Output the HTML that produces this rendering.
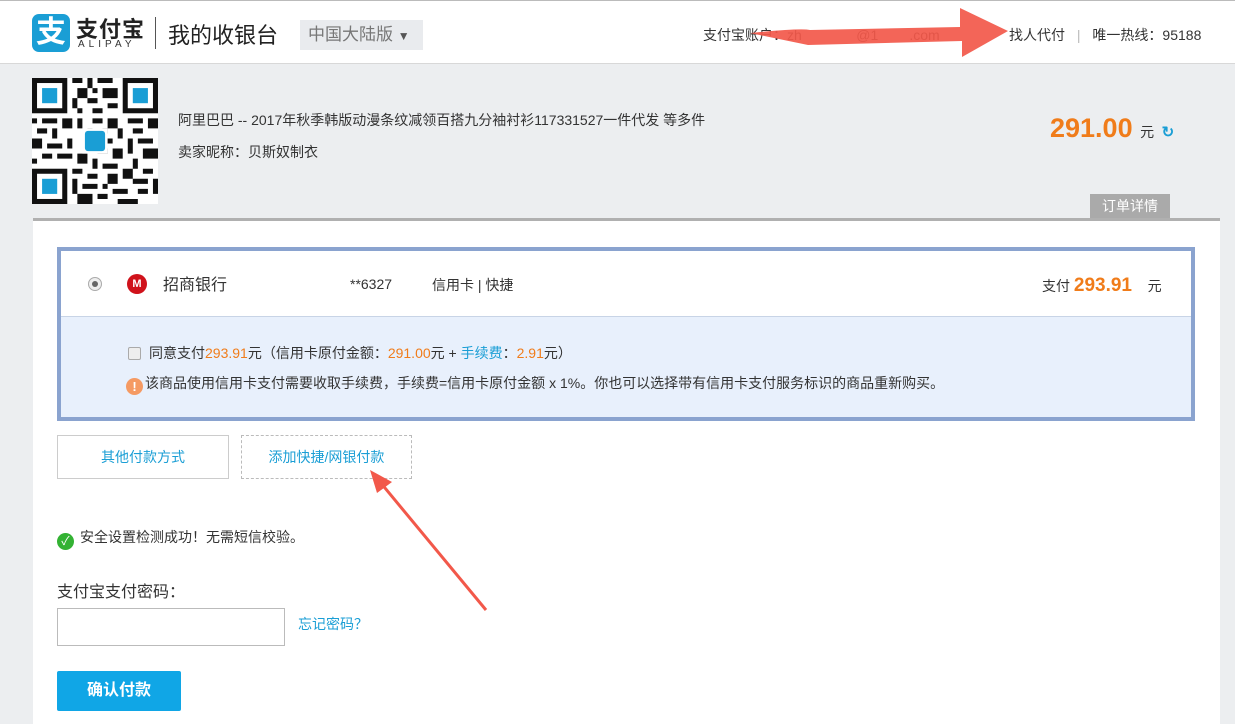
<!DOCTYPE html>
<html><head><meta charset="utf-8"><style>
*{margin:0;padding:0;box-sizing:border-box}
body{width:1235px;height:724px;overflow:hidden;background:#eceef0;font-family:"Liberation Sans","Noto Sans CJK SC",sans-serif;color:#333;position:relative;font-size:14px}
.abs{position:absolute}
#hdr{left:0;top:0;width:1235px;height:64px;background:#fff;border-top:1px solid #bbb;border-bottom:1px solid #d8d8d8}
#panel{left:33px;top:218px;width:1187px;height:506px;background:#fff;border-top:3px solid #b0b0b0}
.or{color:#f07c1a}
.bl{color:#1a9ed5}
</style></head><body>
<div id="hdr" class="abs">
  <div class="abs" style="left:32px;top:13px;width:38px;height:38px;background:#1a9ed5;border-radius:7px;color:#fff;font-size:30px;line-height:38px;text-align:center;font-weight:bold">支</div>
  <div class="abs" style="left:76px;top:11px;font-size:22px;font-weight:bold;color:#222;letter-spacing:1px">支付宝</div>
  <div class="abs" style="left:78px;top:38px;font-size:10px;letter-spacing:4px;color:#333">ALIPAY</div>
  <div class="abs" style="left:155px;top:16px;width:1px;height:32px;background:#555"></div>
  <div class="abs" style="left:168px;top:17px;font-size:22px;color:#222">我的收银台</div>
  <div class="abs" style="left:300px;top:19px;width:123px;height:30px;background:#e9ebee;color:#777;font-size:17px;line-height:30px;padding-left:8px">中国大陆版 <span style="font-size:12px;color:#555">▼</span></div>
  <div class="abs" style="left:703px;top:24px;font-size:14px;color:#333">支付宝账户：zh&nbsp;&nbsp;&nbsp;&nbsp;&nbsp;&nbsp;&nbsp;&nbsp;&nbsp;&nbsp;&nbsp;&nbsp;&nbsp;&nbsp;@1&nbsp;&nbsp;&nbsp;&nbsp;&nbsp;&nbsp;&nbsp;&nbsp;.com</div>
  <div class="abs" style="left:1009px;top:24px;font-size:14px;color:#333">找人代付 <span style="color:#bbb;margin:0 8px">|</span> 唯一热线：95188</div>
</div>
<!-- QR -->
<svg class="abs" style="left:32px;top:78px" width="126" height="126" viewBox="0 0 25 25">
<rect width="25" height="25" fill="#fff"/>
<g fill="#111">
<rect x="0" y="0" width="7" height="7"/><rect x="18" y="0" width="7" height="7"/><rect x="0" y="18" width="7" height="7"/>
<path d="M8 0h2v1h-2zM11 0h1v2h-1zM13 0h3v1h-3zM9 2h2v2h-2zM12 2h1v1h-1zM14 2h3v2h-3zM8 4h1v2h-1zM11 4h2v1h-2zM15 5h2v1h-2zM9 6h1v1h-1zM12 6h2v1h-2zM0 8h1v1h-1zM2 8h3v1h-3zM6 8h2v2h-2zM9 8h1v2h-1zM12 8h2v1h-2zM15 8h2v2h-2zM19 8h3v1h-3zM23 8h2v2h-2zM1 10h2v1h-2zM4 10h1v2h-1zM11 10h1v1h-1zM14 10h1v1h-1zM17 10h1v2h-1zM20 10h2v1h-2zM0 12h2v2h-2zM3 13h3v1h-3zM7 12h1v2h-1zM14 12h2v1h-2zM19 12h1v3h-1zM21 12h3v1h-3zM2 15h2v1h-2zM5 15h3v1h-3zM9 15h2v2h-2zM13 14h2v1h-2zM16 14h2v2h-2zM22 14h3v2h-3zM0 16h1v1h-1zM12 16h1v2h-1zM14 17h3v1h-3zM20 16h1v2h-1zM8 18h2v1h-2zM11 19h2v1h-2zM18 18h2v2h-2zM22 18h2v1h-2zM8 20h1v3h-1zM10 21h3v1h-3zM15 19h2v2h-2zM20 20h3v1h-3zM24 20h1v3h-1zM9 23h3v2h-3zM13 23h2v1h-2zM16 22h3v1h-3zM17 24h4v1h-4zM21 22h2v1h-2zM14 21h1v1h-1z"/>
</g>
<g fill="#fff"><rect x="1" y="1" width="5" height="5"/><rect x="19" y="1" width="5" height="5"/><rect x="1" y="19" width="5" height="5"/><rect x="10" y="10" width="5" height="5"/></g>
<g fill="#1a9ed5"><rect x="2" y="2" width="3" height="3"/><rect x="20" y="2" width="3" height="3"/><rect x="2" y="20" width="3" height="3"/><rect x="10.5" y="10.5" width="4" height="4" rx=".6"/></g>
</svg>
<div class="abs" style="left:178px;top:110px;font-size:14px;color:#333">阿里巴巴 -- 2017年秋季韩版动漫条纹减领百搭九分袖衬衫117331527一件代发 等多件</div>
<div class="abs" style="left:178px;top:142px;font-size:14px;color:#333">卖家昵称：贝斯奴制衣</div>
<div class="abs" style="left:1050px;top:113px;font-size:27px;font-weight:bold;color:#f07c1a">291.00 <span style="font-size:14px;color:#333;font-weight:normal">元</span> <span style="font-size:15px;color:#1a9ed5">↻</span></div>
<div class="abs" style="left:1090px;top:194px;width:80px;height:24px;background:#aaa;color:#fff;font-size:14px;line-height:24px;text-align:center">订单详情</div>
<div id="panel" class="abs"></div>
<div class="abs" style="left:57px;top:247px;width:1138px;height:174px;border:4px solid #8aa3cf;background:#e8f0fc">
  <div style="height:66px;background:#fff;border-bottom:1px solid #c8d4e6;position:relative">
    <div class="abs" style="left:27px;top:26px;width:14px;height:14px;border-radius:50%;border:1px solid #aaa;background:#eee"><div style="width:6px;height:6px;border-radius:50%;background:#666;margin:3px"></div></div>
    <div class="abs" style="left:66px;top:23px;width:20px;height:20px;border-radius:50%;background:#d0121b;color:#fff;font-size:11px;text-align:center;line-height:20px;font-weight:bold">M</div>
    <div class="abs" style="left:102px;top:20px;font-size:16px;color:#333">招商银行</div>
    <div class="abs" style="left:289px;top:25px;font-size:14px;color:#333">**6327</div>
    <div class="abs" style="left:371px;top:24px;font-size:14px;color:#333">信用卡 | 快捷</div>
    <div class="abs" style="left:981px;top:24px;font-size:14px;color:#333">支付 <b style="font-size:19px;color:#f07c1a">293.91</b>&nbsp;&nbsp;&nbsp;&nbsp;元</div>
  </div>
  <div class="abs" style="left:67px;top:92px;font-size:14px;color:#333"><span style="display:inline-block;width:13px;height:13px;border:1px solid #aaa;border-radius:2px;background:#eee;vertical-align:-2px;margin-right:8px"></span>同意支付<span class="or">293.91</span>元（信用卡原付金额：<span class="or">291.00</span>元 + <span class="bl">手续费</span>：<span class="or">2.91</span>元）</div>
  <div class="abs" style="left:65px;top:122px;font-size:14px;color:#333"><span style="display:inline-block;width:17px;height:17px;border-radius:50%;background:#f59a63;color:#fff;font-weight:bold;text-align:center;line-height:17px;font-size:13px;vertical-align:-3px;margin-right:2px">!</span>该商品使用信用卡支付需要收取手续费，手续费=信用卡原付金额 x 1%。你也可以选择带有信用卡支付服务标识的商品重新购买。</div>
</div>
<div class="abs" style="left:57px;top:435px;width:172px;height:44px;border:1px solid #ccc;background:#fff;color:#1a9ed5;font-size:14px;text-align:center;line-height:42px">其他付款方式</div>
<div class="abs" style="left:241px;top:435px;width:171px;height:44px;border:1px dashed #bbb;background:#fff;color:#1a9ed5;font-size:14px;text-align:center;line-height:42px">添加快捷/网银付款</div>
<div class="abs" style="left:57px;top:527px;font-size:14px;color:#333"><span style="display:inline-block;width:17px;height:17px;border-radius:50%;background:#33b233;color:#fff;text-align:center;line-height:17px;font-size:12px;vertical-align:-3px;margin-right:6px">✓</span>安全设置检测成功！无需短信校验。</div>
<div class="abs" style="left:57px;top:578px;font-size:16px;color:#333">支付宝支付密码：</div>
<div class="abs" style="left:57px;top:608px;width:228px;height:38px;border:1px solid #bbb;background:#fff"></div>
<div class="abs" style="left:298px;top:614px;font-size:14px;color:#1a9ed5">忘记密码？</div>
<div class="abs" style="left:57px;top:671px;width:124px;height:40px;background:#10a6e6;border-radius:2px;color:#fff;font-size:16px;font-weight:bold;text-align:center;line-height:40px">确认付款</div>
<svg class="abs" style="left:0;top:0" width="1235" height="724">
<g fill="#f2584a" opacity=".92">
<path d="M750 33 Q800 28 810 30 L960 27 L960 8 L1008 31 L962 57 L962 41 L808 45 Z"/>
</g>
<line x1="486" y1="610" x2="380" y2="482" stroke="#f2584a" stroke-width="3"/>
<path d="M370 470 L392 482 L377 493 Z" fill="#f2584a"/>
</svg>
</body></html>
